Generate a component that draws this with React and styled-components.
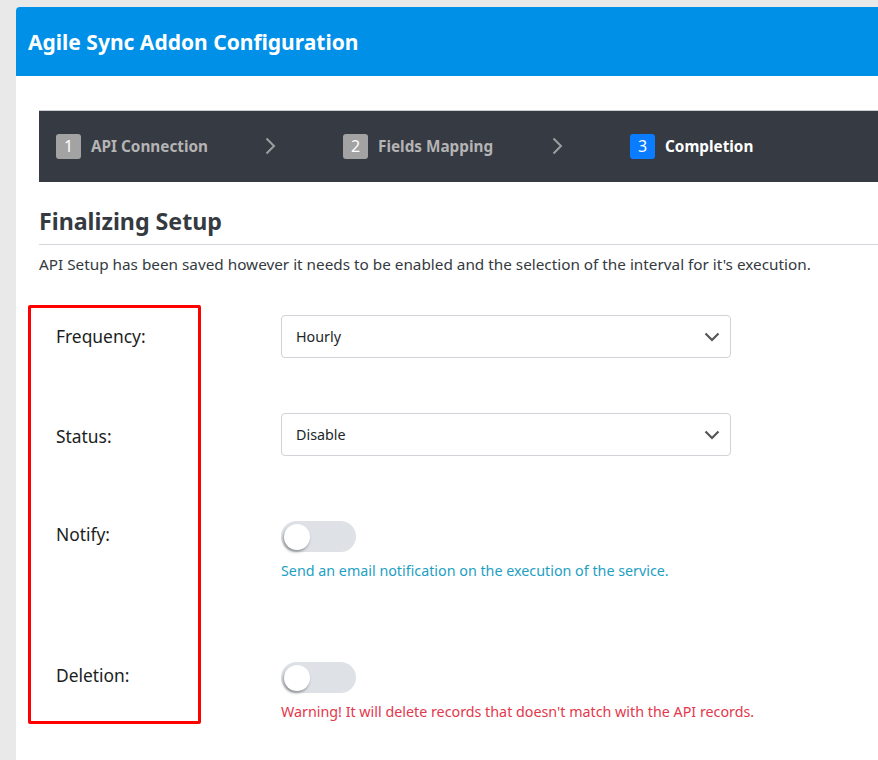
import React from 'react';
import styled, { createGlobalStyle } from 'styled-components';

const GlobalStyle = createGlobalStyle`
  html, body {
    margin: 0;
    padding: 0;
    overflow: hidden;
    background: #e9e9e9;
  }
  body {
    font-family: "Noto Sans", "Open Sans", sans-serif;
    color: #212529;
  }
`;

const Page = styled.div`
  padding: 7px 0 0 16px;
  min-height: 760px;
  box-sizing: border-box;
`;

const Panel = styled.div`
  width: 1000px;
  min-height: 753px;
  background: #ffffff;
  border-top-left-radius: 4px;
`;

const Header = styled.header`
  height: 69px;
  display: flex;
  align-items: center;
  padding-left: 12px;
  background: #0090e8;
  border-top-left-radius: 4px;
  color: #ffffff;
  font-size: 21px;
  font-weight: 700;
`;

const Stepper = styled.nav`
  margin: 34px 0 0 23px;
  height: 72px;
  box-sizing: border-box;
  padding: 0 0 1px 17px;
  display: flex;
  align-items: center;
  background: #363a42;
  border-top: 1px solid #c9ccd1;
`;

const Step = styled.div`
  width: 287px;
  flex: none;
  display: flex;
  align-items: center;
  padding-right: 67px;
  box-sizing: border-box;
`;

const Badge = styled.span`
  width: 25px;
  height: 25px;
  border-radius: 3px;
  display: flex;
  align-items: center;
  justify-content: center;
  background: ${(p) => (p.$active ? '#0a7cff' : '#a3a3a3')};
  color: #ffffff;
  font-size: 16px;
  line-height: 1;
`;

const StepLabel = styled.span`
  margin-left: 10px;
  font-size: 15.3px;
  font-weight: 700;
  color: ${(p) => (p.$active ? '#ffffff' : '#b4b4b4')};
`;

const Chevron = styled.svg`
  margin-left: auto;
  flex: none;
`;

const Heading = styled.h2`
  margin: 25px 0 0 23px;
  padding-bottom: 8px;
  border-bottom: 1px solid #d3d6da;
  font-size: 23.2px;
  line-height: 29px;
  font-weight: 700;
  color: #343a40;
`;

const Intro = styled.p`
  margin: 9px 0 0 23px;
  font-size: 15.3px;
  line-height: 21px;
  color: #343a40;
`;

const Form = styled.div`
  margin: 30px 0 0 12px;
  display: grid;
  grid-template-columns: 253px 450px;
  align-items: start;
`;

const Highlight = styled.div`
  grid-column: 1;
  grid-row: 1 / span 4;
  align-self: stretch;
  width: 173px;
  box-sizing: border-box;
  border: 3px solid #ff0000;
  border-radius: 2px;
`;

const Label = styled.label`
  grid-column: 1;
  grid-row: ${(p) => p.$row};
  margin-top: ${(p) => p.$top}px;
  padding: ${(p) => p.$offset}px 0 0 28px;
  font-size: 17.4px;
  line-height: 24px;
  color: #1b1e21;
`;

const Control = styled.div`
  grid-column: 2;
  grid-row: ${(p) => p.$row};
  margin-top: ${(p) => p.$top}px;
  padding-bottom: ${(p) => p.$bottom || 0}px;
`;

const Select = styled.div`
  height: 43px;
  box-sizing: border-box;
  border: 1px solid #d0d3d7;
  border-radius: 4px;
  display: flex;
  align-items: center;
  justify-content: space-between;
  padding: 0 10px 0 14px;
  font-size: 14.3px;
  color: #212529;
`;

const Track = styled.div`
  width: 75px;
  height: 31px;
  border-radius: 16px;
  background: #dee1e6;
  display: flex;
  align-items: center;
  padding-left: 3px;
  box-sizing: border-box;
`;

const Knob = styled.span`
  width: 26px;
  height: 26px;
  border-radius: 50%;
  background: #ffffff;
  box-shadow: -1px 2px 3px rgba(0, 0, 0, 0.35);
`;

const Hint = styled.div`
  margin-top: 8px;
  font-size: 14.3px;
  line-height: 21px;
  white-space: nowrap;
  color: ${(p) => (p.$danger ? '#e4374c' : '#1d9fc2')};
`;

const steps = [
  { n: 1, label: 'API Connection' },
  { n: 2, label: 'Fields Mapping' },
  { n: 3, label: 'Completion', active: true },
];

const Caret = () => (
  <svg width="16" height="10" viewBox="0 0 16 10">
    <polyline points="1.5,1.5 8,8 14.5,1.5" fill="none" stroke="#555" strokeWidth="2.2" />
  </svg>
);

const Toggle = () => (
  <Track>
    <Knob />
  </Track>
);

export default function App() {
  return (
    <>
      <GlobalStyle />
      <Page>
        <Panel>
          <Header>Agile Sync Addon Configuration</Header>
          <Stepper>
            {steps.map((s, i) => (
              <Step key={s.n}>
                <Badge $active={s.active}>{s.n}</Badge>
                <StepLabel $active={s.active}>{s.label}</StepLabel>
                {i < steps.length - 1 && (
                  <Chevron width="11" height="18" viewBox="0 0 11 18">
                    <polyline points="1.5,1.5 9,9 1.5,16.5" fill="none" stroke="#9c9ea1" strokeWidth="2" />
                  </Chevron>
                )}
              </Step>
            ))}
          </Stepper>
          <Heading>Finalizing Setup</Heading>
          <Intro>
            API Setup has been saved however it needs to be enabled and the selection of the interval for it's execution.
          </Intro>
          <Form>
            <Highlight />
            <Label $row={1} $top={10} $offset={9}>Frequency:</Label>
            <Control $row={1} $top={10}>
              <Select>
                Hourly
                <Caret />
              </Select>
            </Control>
            <Label $row={2} $top={55} $offset={11}>Status:</Label>
            <Control $row={2} $top={55}>
              <Select>
                Disable
                <Caret />
              </Select>
            </Control>
            <Label $row={3} $top={65} $offset={1}>Notify:</Label>
            <Control $row={3} $top={65}>
              <Toggle />
              <Hint>Send an email notification on the execution of the service.</Hint>
            </Control>
            <Label $row={4} $top={81} $offset={1}>Deletion:</Label>
            <Control $row={4} $top={81} $bottom={2}>
              <Toggle />
              <Hint $danger>Warning! It will delete records that doesn't match with the API records.</Hint>
            </Control>
          </Form>
        </Panel>
      </Page>
    </>
  );
}
